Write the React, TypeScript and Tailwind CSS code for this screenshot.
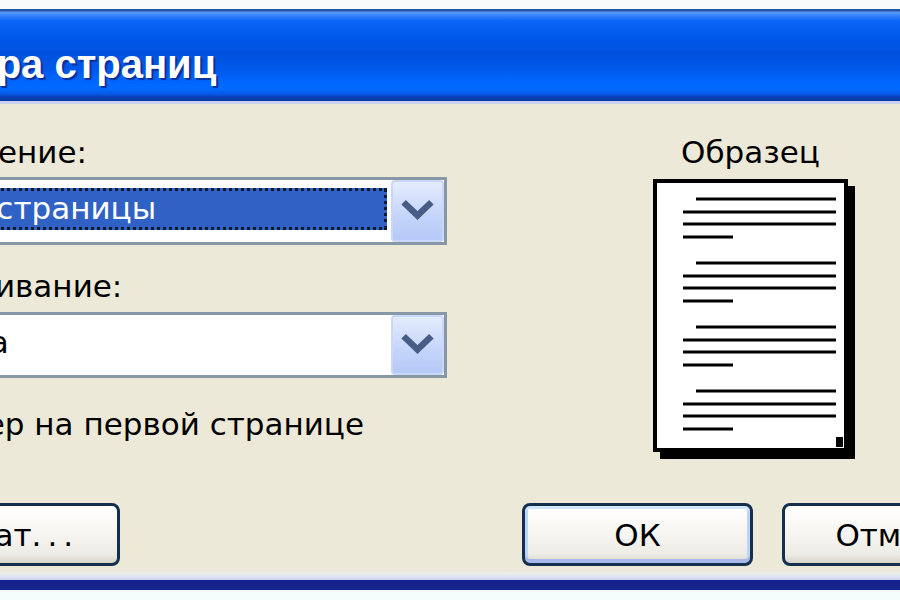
import React from "react";

const Chevron = () => (
  <svg width="53" height="56" viewBox="0 0 53 56">
    <polyline points="14,21 26.5,33 39,21" fill="none" stroke="#475d85" strokeWidth="7" strokeLinecap="square" />
  </svg>
);

const DropButton = () => (
  <div className="w-[53px] shrink-0 rounded-[4px] border-2 border-[#c9d7fa] bg-[linear-gradient(to_bottom,#e4ecfe,#c4d4fa_60%,#b6c9f7)] flex items-center justify-center">
    <Chevron />
  </div>
);

const PagePreview = () => {
  const groups = [0, 64, 128, 192];
  return (
    <div className="w-[195px] h-[273px] border-4 border-black bg-white shadow-[7px_7px_0_0_#000]">
      <svg width="187" height="265" viewBox="0 0 187 265">
        {groups.map((g) => (
          <g key={g} stroke="#000" strokeWidth="3">
            <line x1="39" y1={16 + g} x2="179" y2={16 + g} />
            <line x1="26" y1={29 + g} x2="179" y2={29 + g} />
            <line x1="26" y1={41 + g} x2="179" y2={41 + g} />
            <line x1="26" y1={54 + g} x2="76" y2={54 + g} />
          </g>
        ))}
        <rect x="179" y="254" width="7" height="10" fill="#000" />
      </svg>
    </div>
  );
};

const XPButton = ({
  children,
  def,
  className,
}: {
  children: React.ReactNode;
  def?: boolean;
  className?: string;
}) => (
  <div
    className={
      "w-[231px] h-[63px] shrink-0 rounded-[8px] border-[3px] border-[#15304f] flex items-center justify-center leading-[36px] text-black whitespace-nowrap bg-[linear-gradient(to_bottom,#ffffff,#f6f5f0_50%,#ecebe4_85%,#d8d4c8)] " +
      (def
        ? "shadow-[inset_0_3px_0_#cee7ff,inset_0_-4px_0_#a9b8ea,inset_3px_0_0_#bcd4f6,inset_-3px_0_0_#bcd4f6] "
        : "") +
      (className ?? "")
    }
  >
    {children}
  </div>
);

export default function App() {
  return (
    <div
      className="w-[900px] h-[600px] overflow-hidden bg-white flex flex-col"
      style={{ fontFamily: '"DejaVu Sans", sans-serif' }}
    >
      <div className="h-[9px] shrink-0 bg-[#f6fcfb]" />
      <div className="h-[92px] shrink-0 overflow-hidden bg-[linear-gradient(to_bottom,#24569e_0px,#24569e_2px,#5b9cf9_3px,#3a86fb_6px,#0a64f4_12px,#0058e8_30px,#0052de_45px,#0058ea_60px,#0064fc_70px,#006cff_80px,#0858e6_85px,#0a40b4_88px,#0b3aa6_92px)]">
        <div
          className="ml-[-108px] pt-[35px] leading-[40px] text-[40px] font-bold text-white whitespace-nowrap [text-shadow:2px_2px_1px_#0a2f9a]"
          style={{ fontFamily: '"Liberation Sans", sans-serif' }}
        >
          Номера страниц
        </div>
      </div>
      <div className="h-[3px] shrink-0 bg-[#c7d1f1]" />

      <div className="flex-1 bg-[#ece9d8] flex flex-col text-[31px] text-black overflow-hidden">
        <div className="flex pt-[30px]">
          <div className="ml-[-111px] w-[558px] shrink-0 flex flex-col">
            <div className="leading-[36px] whitespace-nowrap">Положение:</div>
            <div className="mt-[7px] h-[68px] border-[3px] border-[#8797a6] bg-white flex">
              <div className="flex-1 flex flex-col pl-[8px] pr-[4px] pt-[8px]">
                <div className="h-[42px] bg-[#2f62c4] outline-[3px] outline-dotted outline-offset-[-3px] outline-[#0c1a30] text-white leading-[36px] pt-[2px] whitespace-nowrap overflow-hidden">
                  <span className="ml-[-10px]">Внизу страницы</span>
                </div>
              </div>
              <DropButton />
            </div>
            <div className="mt-[23px] leading-[36px] whitespace-nowrap">
              <span className="ml-[-17px]">Выравнивание:</span>
            </div>
            <div className="mt-[8px] h-[66px] border-[3px] border-[#8797a6] bg-white flex">
              <div className="flex-1 pt-[9px] leading-[36px] whitespace-nowrap overflow-hidden">
                <span className="ml-[-1px]">Справа</span>
              </div>
              <DropButton />
            </div>
            <div className="mt-[27px] ml-[-20px] flex items-center gap-[14px]">
              <div className="w-[37px] h-[37px] border-[3px] border-[#1c5180] bg-white" />
              <div className="leading-[36px] whitespace-nowrap">Номер на первой странице</div>
            </div>
          </div>
          <div className="ml-[206px] w-[195px] shrink-0 flex flex-col items-center">
            <div className="leading-[36px] whitespace-nowrap">Образец</div>
            <div className="mt-[9px] self-start">
              <PagePreview />
            </div>
          </div>
        </div>
        <div className="mt-[51px] flex">
          <XPButton className="ml-[-111px]">
            <span className="ml-[-24px]">
              Формат<span className="tracking-[6px]">...</span>
            </span>
          </XPButton>
          <XPButton def className="ml-[402px]">
            ОК
          </XPButton>
          <XPButton className="ml-[29px]">Отмена</XPButton>
        </div>
      </div>

      <div className="h-[8px] shrink-0 bg-[linear-gradient(to_bottom,#eef0e4,#dfe5f3_60%,#c3cdf2)]" />
      <div className="h-[10px] shrink-0 bg-[#16238c]" />
      <div className="h-[10px] shrink-0 bg-[#f3fbfb]" />
    </div>
  );
}
